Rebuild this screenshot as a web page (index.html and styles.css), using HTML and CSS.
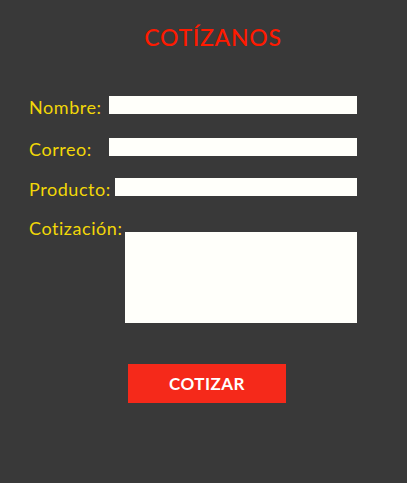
FILE: index.html
```html
<!DOCTYPE html>
<html lang="es">
<head>
<meta charset="utf-8">
<link rel="stylesheet" href="styles.css">
</head>
<body>
<div class="page">
  <h1 class="title">COTÍZANOS</h1>
  <form class="form">
    <div class="row row-1">
      <label class="label">Nombre:</label>
      <input class="field field-wide" type="text">
    </div>
    <div class="row row-2">
      <label class="label">Correo:</label>
      <input class="field field-wide" type="text">
    </div>
    <div class="row row-3">
      <label class="label">Producto:</label>
      <input class="field field-mid" type="text">
    </div>
    <div class="row row-area">
      <label class="label">Cotización:</label>
      <textarea class="area"></textarea>
    </div>
    <div class="actions">
      <button class="btn" type="button">COTIZAR</button>
    </div>
  </form>
</div>
</body>
</html>
```

FILE: styles.css
```css
html, body {
  margin: 0;
  padding: 0;
  background: #393939;
}
.page {
  width: 407px;
  height: 483px;
  background: #393939;
  font-family: Lato, "Open Sans", sans-serif;
  padding-top: 24px;
  box-sizing: border-box;
}
.title {
  margin: 0;
  padding-left: 19px;
  text-align: center;
  color: #ff1a00;
  font-size: 23px;
  font-weight: 500;
  line-height: 26px;
  letter-spacing: 0.7px;
}
.form {
  width: 328px;
  margin-left: 29px;
  padding-top: 46px;
}
.row {
  display: flex;
  align-items: flex-end;
}
.row-2 { margin-top: 24px; }
.row-3 { margin-top: 22px; }
.row-area {
  margin-top: 22px;
  align-items: flex-start;
}
.label {
  color: #f2d708;
  font-size: 18px;
  line-height: 20px;
  margin-bottom: -3px;
  letter-spacing: 0.55px;
}
.row-area .label { margin-bottom: 0; }
.field {
  margin-left: auto;
  height: 18px;
  border: 0;
  padding: 0;
  background: #fffffa;
  box-sizing: border-box;
  display: block;
}
.field-wide { width: 248px; }
.field-mid { width: 242px; }
.area {
  margin-left: auto;
  margin-top: 14px;
  width: 232px;
  height: 91px;
  border: 0;
  padding: 0;
  background: #fffffa;
  resize: none;
  display: block;
}
.actions {
  margin-top: 41px;
  padding-left: 99px;
}
.btn {
  display: block;
  width: 158px;
  height: 39px;
  border: 0;
  background: #f5291a;
  color: #ffffff;
  font-family: Lato, "Open Sans", sans-serif;
  font-size: 17px;
  font-weight: 700;
  letter-spacing: 0.5px;
  padding: 0;
}
```
